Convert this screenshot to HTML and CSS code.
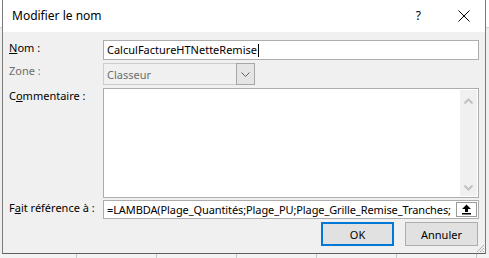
FILE: index.html
```html
<!DOCTYPE html>
<html lang="fr">
<head>
    <meta charset="UTF-8">
    <title>Modifier le nom</title>
    <link rel="stylesheet" href="styles.css">
</head>
<body>
    <div class="dialog">
        <div class="titlebar">
            <span class="title">Modifier le nom</span>
            <span class="help">?</span>
            <svg class="close" width="12" height="12" viewBox="0 0 12 12">
                <path d="M0.5 0.5 L11.5 11.5 M11.5 0.5 L0.5 11.5" stroke="#000" stroke-width="1" fill="none"/>
            </svg>
        </div>

        <div class="content">
            <div class="row row-name">
                <label class="label"><u>N</u>om :</label>
                <div class="field text-input">CalculFactureHTNetteRemise<span class="caret"></span></div>
            </div>

            <div class="row row-zone">
                <label class="label disabled">Zone :</label>
                <div class="field select">
                    <span class="select-value">Classeur</span>
                    <span class="select-btn">
                        <svg width="9" height="5" viewBox="0 0 9 5">
                            <path d="M0.5 0.5 L4.5 4.5 L8.5 0.5" stroke="#606060" fill="none"/>
                        </svg>
                    </span>
                </div>
            </div>

            <div class="row row-comment">
                <label class="label">C<u>o</u>mmentaire :</label>
                <div class="field textarea">
                    <div class="scrollbar">
                        <svg width="9" height="6" viewBox="0 0 9 6">
                            <path d="M0.5 5.5 L4.5 1.5 L8.5 5.5" stroke="#c2c2c2" stroke-width="2" fill="none"/>
                        </svg>
                        <svg width="9" height="6" viewBox="0 0 9 6">
                            <path d="M0.5 0.5 L4.5 4.5 L8.5 0.5" stroke="#c2c2c2" stroke-width="2" fill="none"/>
                        </svg>
                    </div>
                </div>
            </div>

            <div class="row row-ref">
                <label class="label">F<u>a</u>it référence à :</label>
                <div class="field text-input ref-input">
                    <span class="ref-value">=LAMBDA(Plage_Quantités;Plage_PU;Plage_Grille_Remise_Tranches;</span>
                    <span class="ref-btn">
                        <svg width="11" height="11" viewBox="0 0 11 11">
                            <path d="M5.5 0.5 L10 5 L7 5 L7 8 L4 8 L4 5 L1 5 Z" fill="#000"/>
                            <rect x="1" y="9" width="9" height="1.5" fill="#000"/>
                        </svg>
                    </span>
                </div>
            </div>

            <div class="buttons">
                <button class="btn btn-default">OK</button>
                <button class="btn">Annuler</button>
            </div>
        </div>

        <svg class="grip" width="9" height="9" viewBox="0 0 9 9">
            <path d="M8 1 L1 8 M8 4 L4 8 M8 7 L7 8" stroke="#b0b0b0" fill="none"/>
        </svg>
    </div>
    <div class="sheet"></div>
</body>
</html>
```

FILE: styles.css
```css
body {
    margin: 0;
    width: 489px;
    height: 258px;
    overflow: hidden;
    font-family: "Noto Sans", "Open Sans", sans-serif;
    font-size: 11px;
    color: #000;
    background: linear-gradient(#ffffff 0, #ffffff 27px, #d4d4d4 27px, #d4d4d4 28px, #efefef 28px);
}
.dialog {
    position: relative;
    box-sizing: border-box;
    width: 484px;
    height: 254px;
    margin-left: 2px;
    background-color: #f0f0f0;
    border: 1px solid #7a7a7a;
    border-top: none;
    border-bottom-color: #5f5f5f;
}
.titlebar {
    display: flex;
    align-items: center;
    height: 32px;
    background-color: #fff;
    padding-left: 9px;
}
.title {
    flex: 1;
    font-size: 12px;
    margin-top: -1px;
}
.help {
    font-size: 12px;
    margin-right: 37px;
    margin-top: -1px;
}
.close {
    margin-right: 15px;
}
.content {
    padding: 8px 5px 0 6px;
}
.row {
    display: grid;
    grid-template-columns: 94px 376px;
    margin-bottom: 3px;
}
.label {
    line-height: 14px;
    padding-top: 1px;
    white-space: nowrap;
}
.label.disabled {
    color: #6d6d6d;
}
.field {
    box-sizing: border-box;
    border: 1px solid #adadad;
    background-color: #fff;
}
.text-input {
    height: 20px;
    padding-left: 3px;
    line-height: 18px;
    display: flex;
    align-items: center;
}
.caret {
    display: inline-block;
    width: 1px;
    height: 13px;
    background-color: #000;
    margin-left: 1px;
}
.select {
    display: flex;
    width: 152px;
    height: 22px;
    border-color: #cccccc;
    background-color: #f0f0f0;
    color: #6d6d6d;
}
.select-value {
    flex: 1;
    padding-left: 3px;
    line-height: 20px;
    margin-top: 1px;
}
.select-btn {
    display: flex;
    align-items: center;
    justify-content: center;
    width: 17px;
    margin: -1px -1px -1px 0;
    border: 1px solid #a6a6a6;
    background-color: #e5e5e5;
}
.textarea {
    display: flex;
    justify-content: flex-end;
    height: 110px;
    padding: 1px;
}
.scrollbar {
    display: flex;
    flex-direction: column;
    justify-content: space-between;
    align-items: center;
    width: 17px;
    padding: 8px 0 5px;
    box-sizing: border-box;
    background-color: #f0f0f0;
}
.row-comment {
    margin-bottom: 2px;
}
.ref-input {
    height: 19px;
    padding-right: 1px;
}
.ref-value {
    flex: 1;
    white-space: nowrap;
    overflow: hidden;
    letter-spacing: -0.1px;
}
.ref-btn {
    display: flex;
    align-items: center;
    justify-content: center;
    box-sizing: border-box;
    width: 21px;
    height: 15px;
    border: 1px solid #9a9a9a;
    background-color: #fff;
}
.row-ref {
    margin-bottom: 3px;
}
.buttons {
    display: flex;
    justify-content: flex-end;
    gap: 11px;
    padding-right: 2px;
}
.btn {
    box-sizing: border-box;
    width: 73px;
    height: 24px;
    font-family: inherit;
    font-size: 11px;
    color: #000;
    background-color: #e1e1e1;
    border: 1px solid #adadad;
    padding: 0;
}
.btn-default {
    border: 2px solid #0078d7;
}
.grip {
    position: absolute;
    right: 0;
    bottom: 0;
}
.sheet {
    height: 4px;
    background: repeating-linear-gradient(90deg, #f3f3f3 0, #f3f3f3 76px, #c8c8c8 76px, #c8c8c8 77px, #f3f3f3 77px, #f3f3f3 80px);
}
```
